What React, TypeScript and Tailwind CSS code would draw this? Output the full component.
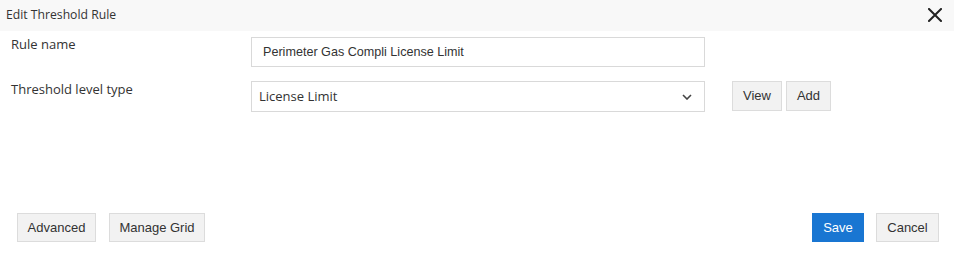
import React from "react";

const sans = { fontFamily: '"Open Sans", sans-serif' };

export default function App() {
  return (
    <div className="w-[954px] h-[258px] bg-white flex flex-col text-[#333]" style={{ fontFamily: '"Liberation Sans", Arial, sans-serif' }}>
      <div className="h-[31px] bg-[#f8f8f8] flex items-center justify-between pl-[6px] pr-[12px]">
        <span className="text-[12.2px] text-[#333]" style={sans}>Edit Threshold Rule</span>
        <svg width="14" height="14" viewBox="0 0 14 14" className="mt-[-2px]">
          <path d="M1 1 L13 13 M13 1 L1 13" stroke="#222" strokeWidth="2" strokeLinecap="square" />
        </svg>
      </div>
      <div className="flex flex-col pl-[11px] pt-[6px] gap-[14px]">
        <div className="flex items-start">
          <div className="w-[240px] text-[13px] leading-[18px] mt-[-2px]" style={sans}>Rule name</div>
          <div className="w-[454px] h-[30px] border border-[#d9d9d9] flex items-center pl-[11px] text-[12.6px] text-[#333]">
            Perimeter Gas Compli License Limit
          </div>
        </div>
        <div className="flex items-start">
          <div className="w-[240px] text-[13px] leading-[18px] mt-[-1px]" style={sans}>Threshold level type</div>
          <div className="w-[454px] h-[31px] border border-[#d9d9d9] flex items-center justify-between pl-[7px] pr-[12px]">
            <span className="text-[13px] text-[#333]" style={sans}>License Limit</span>
            <svg width="10" height="6" viewBox="0 0 10 6">
              <path d="M1 1 L5 5 L9 1" stroke="#444" strokeWidth="1.6" fill="none" />
            </svg>
          </div>
          <button className="ml-[27px] w-[50px] h-[30px] bg-[#f2f2f2] border border-[#dcdcdc] text-[13px] text-[#333]">View</button>
          <button className="ml-[4px] w-[45px] h-[30px] bg-[#f2f2f2] border border-[#dcdcdc] text-[13px] text-[#333]">Add</button>
        </div>
      </div>
      <div className="flex-1" />
      <div className="flex items-center justify-between pl-[17px] pr-[15px] pb-[16px]">
        <div className="flex gap-[13px]">
          <button className="w-[79px] h-[29px] bg-[#f2f2f2] border border-[#dcdcdc] text-[13px] text-[#333]">Advanced</button>
          <button className="w-[96px] h-[29px] bg-[#f2f2f2] border border-[#dcdcdc] text-[13px] text-[#333]">Manage Grid</button>
        </div>
        <div className="flex gap-[12px]">
          <button className="w-[52px] h-[29px] bg-[#1976d2] text-[13px] text-white">Save</button>
          <button className="w-[63px] h-[29px] bg-[#f2f2f2] border border-[#dcdcdc] text-[13px] text-[#333]">Cancel</button>
        </div>
      </div>
    </div>
  );
}
